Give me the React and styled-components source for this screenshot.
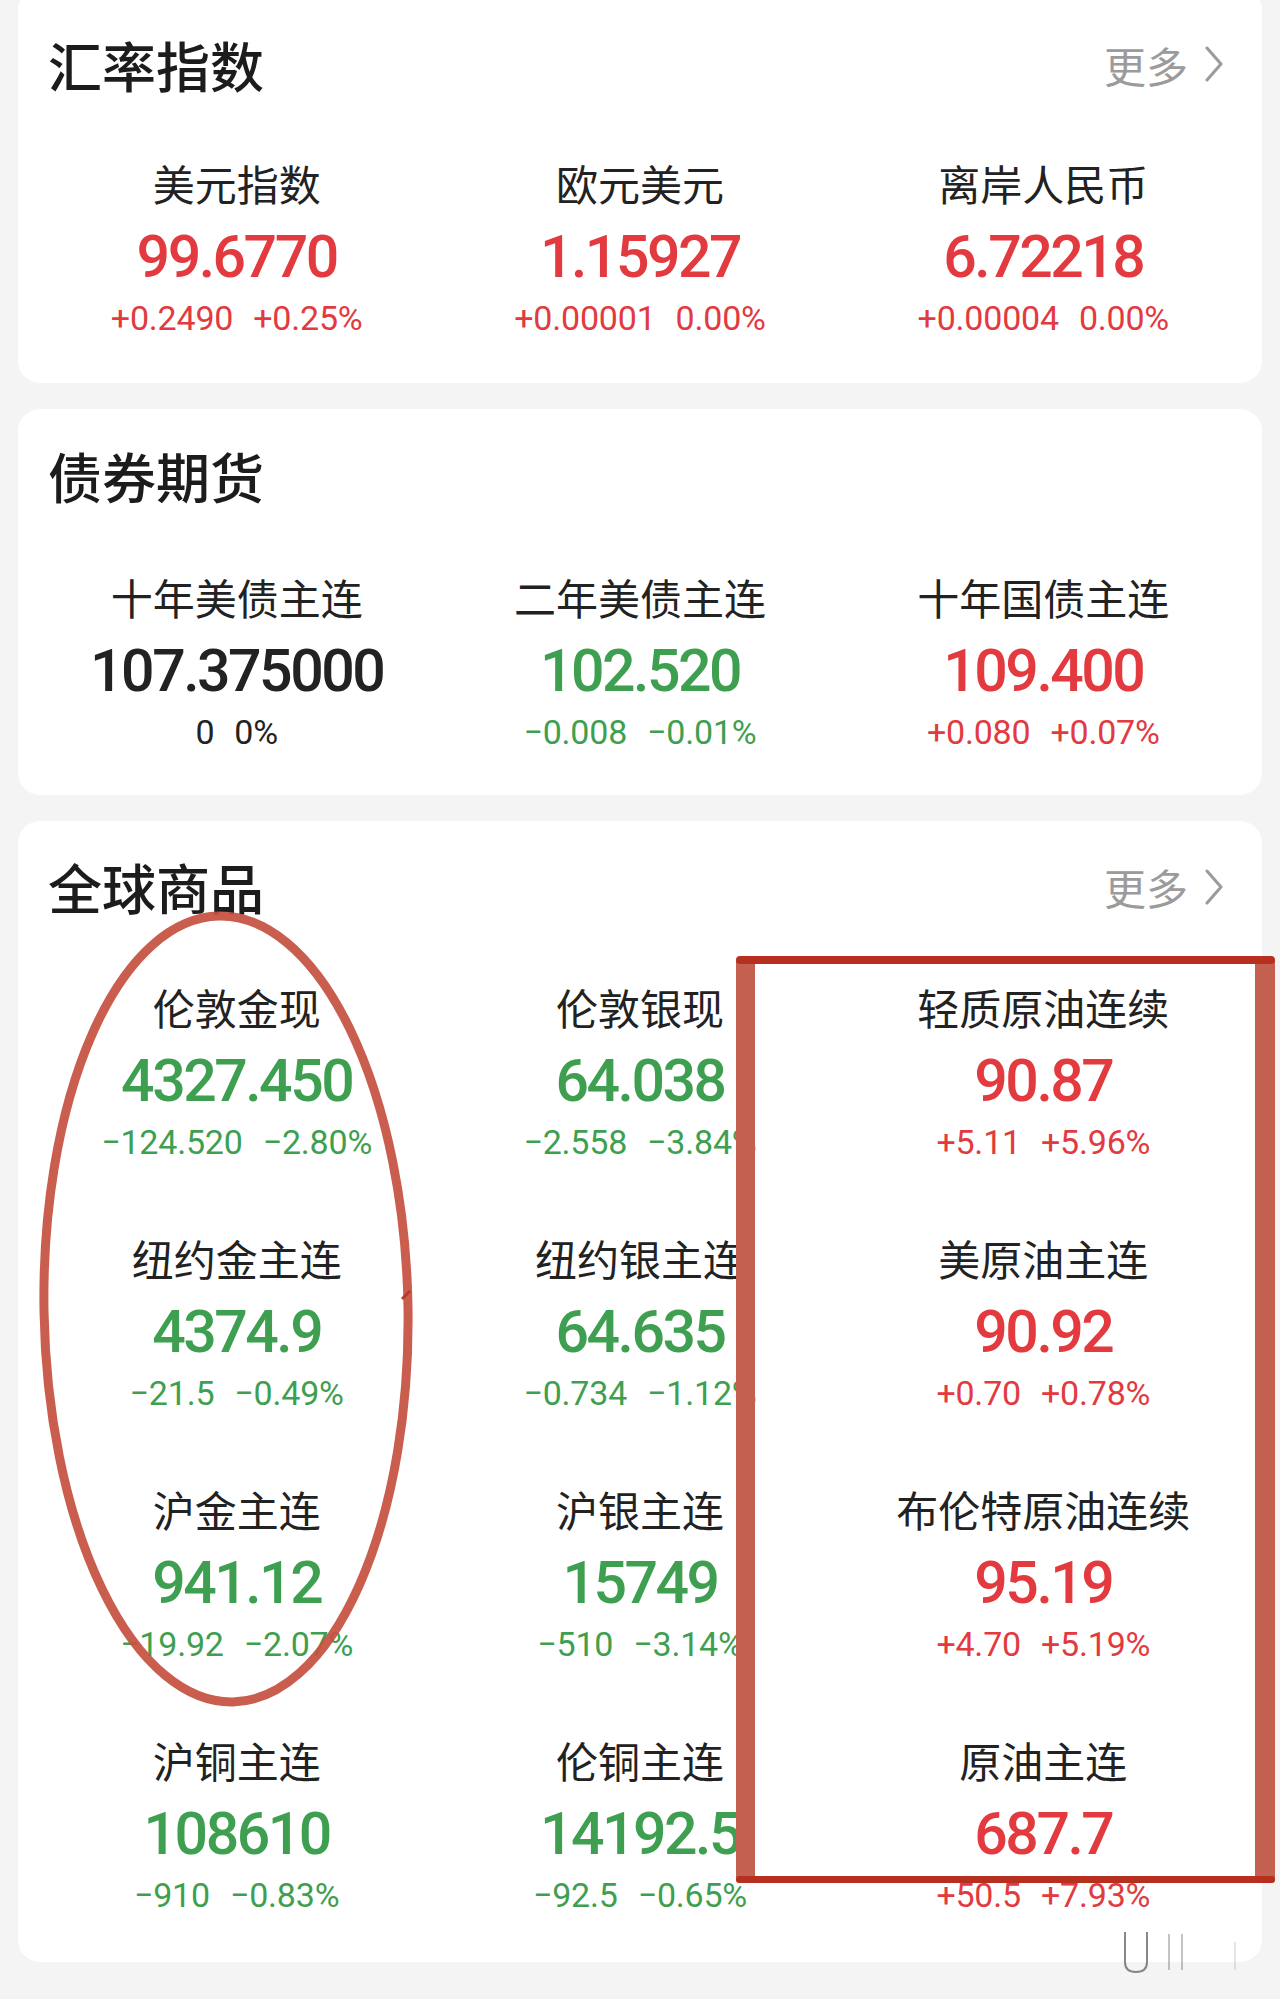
import React from "react";
import styled, { createGlobalStyle } from "styled-components";

const RED = "#e23a3f";
const GREEN = "#3f9f50";
const DARK = "#222222";

const sections = [
  {
    title: "汇率指数",
    more: true,
    header: 128,
    pad: 4,
    items: [
      { name: "美元指数", value: "99.6770", change: "+0.2490", pct: "+0.25%", trend: "up" },
      { name: "欧元美元", value: "1.15927", change: "+0.00001", pct: "0.00%", trend: "up" },
      { name: "离岸人民币", value: "6.72218", change: "+0.00004", pct: "0.00%", trend: "up" },
    ],
  },
  {
    title: "债券期货",
    more: false,
    header: 133,
    pad: 2,
    items: [
      { name: "十年美债主连", value: "107.375000", change: "0", pct: "0%", trend: "flat" },
      { name: "二年美债主连", value: "102.520", change: "−0.008", pct: "−0.01%", trend: "down" },
      { name: "十年国债主连", value: "109.400", change: "+0.080", pct: "+0.07%", trend: "up" },
    ],
  },
  {
    title: "全球商品",
    more: true,
    header: 131,
    pad: 6,
    annotated: true,
    items: [
      { name: "伦敦金现", value: "4327.450", change: "−124.520", pct: "−2.80%", trend: "down" },
      { name: "伦敦银现", value: "64.038", change: "−2.558", pct: "−3.84%", trend: "down" },
      { name: "轻质原油连续", value: "90.87", change: "+5.11", pct: "+5.96%", trend: "up" },
      { name: "纽约金主连", value: "4374.9", change: "−21.5", pct: "−0.49%", trend: "down" },
      { name: "纽约银主连", value: "64.635", change: "−0.734", pct: "−1.12%", trend: "down" },
      { name: "美原油主连", value: "90.92", change: "+0.70", pct: "+0.78%", trend: "up" },
      { name: "沪金主连", value: "941.12", change: "−19.92", pct: "−2.07%", trend: "down" },
      { name: "沪银主连", value: "15749", change: "−510", pct: "−3.14%", trend: "down" },
      { name: "布伦特原油连续", value: "95.19", change: "+4.70", pct: "+5.19%", trend: "up" },
      { name: "沪铜主连", value: "108610", change: "−910", pct: "−0.83%", trend: "down" },
      { name: "伦铜主连", value: "14192.5", change: "−92.5", pct: "−0.65%", trend: "down" },
      { name: "原油主连", value: "687.7", change: "+50.5", pct: "+7.93%", trend: "up" },
    ],
  },
];

const trendColor = (trend) => (trend === "up" ? RED : trend === "down" ? GREEN : DARK);

const GlobalStyle = createGlobalStyle`
  html, body {
    margin: 0;
    padding: 0;
    background: #f4f4f4;
  }
  body {
    font-family: Roboto, "Noto Sans CJK SC", sans-serif;
  }
`;

const Page = styled.div`
  width: 1280px;
  height: 1999px;
  padding: 0 18px;
  box-sizing: border-box;
  display: flex;
  flex-direction: column;
  gap: 26px;
  overflow: hidden;
`;

const Card = styled.section`
  position: relative;
  background: #ffffff;
  border-radius: 22px;
  padding-bottom: ${(p) => p.$pad}px;
  &:first-child {
    margin-top: -12px;
    padding-top: 12px;
  }
`;

const Header = styled.div`
  height: ${(p) => p.$height}px;
  display: flex;
  align-items: center;
  justify-content: space-between;
  padding: 0 38px 0 30px;
`;

const Title = styled.h2`
  margin: 0;
  font-family: "Noto Sans CJK SC", sans-serif;
  font-size: 54px;
  font-weight: 500;
  color: #1c1c1c;
`;

const More = styled.div`
  display: flex;
  align-items: center;
  gap: 16px;
  font-family: "Noto Sans CJK SC", sans-serif;
  font-size: 42px;
  color: #9b9b9b;
`;

const Grid = styled.div`
  display: grid;
  grid-template-columns: repeat(3, 1fr);
  padding: 0 17px;
`;

const Item = styled.div`
  height: 251px;
  display: flex;
  flex-direction: column;
  align-items: center;
  padding-top: 30px;
  box-sizing: border-box;
`;

const Name = styled.div`
  font-family: "Noto Sans CJK SC", sans-serif;
  font-size: 42px;
  line-height: 50px;
  color: ${DARK};
  white-space: nowrap;
`;

const Value = styled.div`
  margin-top: 13px;
  font-family: Roboto, sans-serif;
  font-size: 59px;
  line-height: 72px;
  font-weight: 500;
  letter-spacing: -2.5px;
  color: ${(p) => p.$color};
  white-space: nowrap;
`;

const Change = styled.div`
  margin-top: 2px;
  display: flex;
  gap: 20px;
  font-family: Roboto, sans-serif;
  font-size: 34px;
  line-height: 46px;
  letter-spacing: -0.2px;
  color: ${(p) => p.$color};
  white-space: nowrap;
`;

const Overlay = styled.svg`
  position: absolute;
  pointer-events: none;
  overflow: visible;
  left: ${(p) => p.$left}px;
  top: ${(p) => p.$top}px;
`;

const Chevron = () => (
  <svg width="20" height="36" viewBox="0 0 20 36">
    <polyline points="3,2 17,18 3,34" fill="none" stroke="#9b9b9b" strokeWidth="3" strokeLinecap="round" strokeLinejoin="round" />
  </svg>
);

const Quote = ({ name, value, change, pct, trend }) => {
  const color = trendColor(trend);
  return (
    <Item>
      <Name>{name}</Name>
      <Value $color={color}>{value}</Value>
      <Change $color={color}>
        <span>{change}</span>
        <span>{pct}</span>
      </Change>
    </Item>
  );
};

// hand-drawn marks that sit over the commodities card
const Annotations = () => (
  <>
    <Overlay $left={0} $top={0} width="440" height="1000">
      <ellipse cx="208" cy="488" rx="182" ry="393" fill="none" stroke="#c5503f" strokeWidth="9" opacity="0.92" transform="rotate(-1 208 488)" />
      <path d="M384 478 L392 470" stroke="#b83a2a" strokeWidth="3" />
    </Overlay>
    <Overlay $left={718} $top={135} width="539" height="927">
      <rect x="0" y="0" width="19" height="927" rx="6" fill="#c4604f" />
      <rect x="519" y="0" width="20" height="927" rx="6" fill="#c4604f" />
      <rect x="0" y="0" width="539" height="8" rx="4" fill="#b7301f" />
      <rect x="0" y="920" width="539" height="7" rx="3" fill="#b7301f" />
    </Overlay>
    <Overlay $left={1100} $top={1105} width="140" height="50">
      <path d="M7 6 V36 Q7 46 18 46 Q29 46 29 36 V6" fill="none" stroke="#555" strokeWidth="2" opacity="0.7" />
      <line x1="51" y1="8" x2="51" y2="44" stroke="#888" strokeWidth="2" opacity="0.5" />
      <line x1="64" y1="8" x2="64" y2="44" stroke="#888" strokeWidth="2" opacity="0.5" />
      <line x1="117" y1="16" x2="117" y2="44" stroke="#bbb" strokeWidth="1.5" opacity="0.5" />
    </Overlay>
  </>
);

const App = () => {
  return (
    <>
      <GlobalStyle />
      <Page>
        {sections.map((s) => (
          <Card key={s.title} $pad={s.pad}>
            <Header $height={s.header}>
              <Title>{s.title}</Title>
              {s.more && (
                <More>
                  更多
                  <Chevron />
                </More>
              )}
            </Header>
            <Grid>
              {s.items.map((item) => (
                <Quote key={item.name} {...item} />
              ))}
            </Grid>
            {s.annotated && <Annotations />}
          </Card>
        ))}
      </Page>
    </>
  );
};

export default App;
